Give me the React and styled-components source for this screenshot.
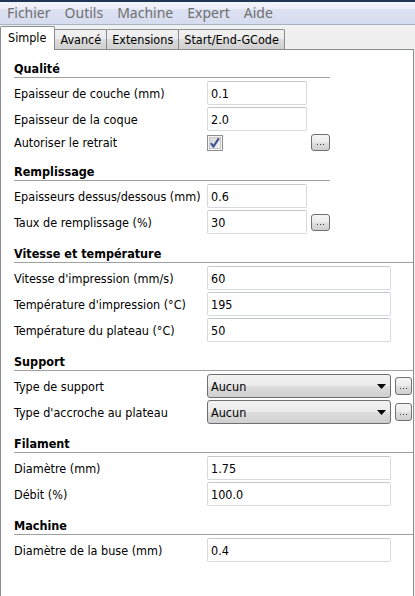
import React from "react";
import styled, { createGlobalStyle } from "styled-components";

const UI = `"DejaVu Sans Condensed", "DejaVu Sans", sans-serif`;

const Global = createGlobalStyle`
  html, body { margin: 0; padding: 0; height: 100%; overflow: hidden; }
  body { background: #f0f0f0; font-family: ${UI}; font-stretch: condensed; color: #000; }
  #root { height: 100%; }
`;

const Window = styled.div`
  display: flex;
  flex-direction: column;
  height: 100%;
`;

const MenuBar = styled.div`
  display: flex;
  height: 22px;
  align-items: center;
  border-top: 2px solid #1d3656;
  border-bottom: 1px solid #a9b1c4;
  background: linear-gradient(#f2f4fa 0, #eceff8 30%, #dce2f2 34%, #d6dcef 100%);
`;

const MenuItem = styled.span`
  padding: 0 7px;
  font-family: "Noto Sans", sans-serif;
  font-stretch: normal;
  font-size: 14px;
  color: #6f6f6f;
  line-height: 22px;
`;

const TabStrip = styled.div`
  display: flex;
  align-items: flex-end;
  height: 24px;
`;

const Tab = styled.div`
  position: relative;
  box-sizing: border-box;
  display: flex;
  align-items: center;
  font-size: 12.5px;
  border: 1px solid #898c95;
  border-bottom: none;
  margin-left: -1px;
  white-space: nowrap;
  border-radius: 2px 2px 0 0;
  ${(p) =>
    p.$active
      ? `
    z-index: 2;
    height: 24px;
    margin-bottom: -1px;
    margin-left: 0;
    padding: 0 8px 3px 7px;
    background: #fff;
  `
      : `
    z-index: 1;
    height: 20px;
    padding: 0 5px;
    background: linear-gradient(#f2f2f2 0, #ebebeb 45%, #dddddd 50%, #cfcfcf 100%);
  `}
`;

const Panel = styled.div`
  flex: 1;
  background: #fff;
  border: 1px solid #898c95;
  border-bottom: none;
  margin-right: 1px;
  padding: 11px 0 0 13px;
`;

const Section = styled.section`
  width: ${(p) => (p.$narrow ? "316px" : "auto")};
  & + & { margin-top: 12px; }
`;

const Header = styled.h3`
  margin: 0 0 3px;
  font-size: 12.5px;
  font-weight: bold;
  line-height: 16px;
  border-bottom: 1px solid #a0a0a0;
`;

const Rows = styled.div`
  display: flex;
  flex-direction: column;
  gap: 2px;
`;

const Row = styled.div`
  display: grid;
  grid-template-columns: 189px ${(p) => (p.$wide ? "184px" : "100px")} auto;
  column-gap: 4px;
  align-items: center;
  justify-items: start;
  height: ${(p) => (p.$compact ? "19px" : "24px")};
`;

const Label = styled.span`
  font-size: 12.5px;
  white-space: nowrap;
`;

const TextBox = styled.div`
  box-sizing: border-box;
  width: 100%;
  height: 24px;
  border: 1px solid #d6d9de;
  border-top-color: #c4c8ce;
  border-radius: 2px;
  padding: 0 3px;
  display: flex;
  align-items: center;
  font-size: 12.5px;
  background: #fff;
`;

const Select = styled.div`
  box-sizing: border-box;
  width: 100%;
  height: 24px;
  border: 1px solid #707070;
  border-radius: 3px;
  padding: 0 4px 0 3px;
  display: flex;
  align-items: center;
  justify-content: space-between;
  font-size: 12.5px;
  background: linear-gradient(#f2f2f2 0, #ebebeb 48%, #dddddd 52%, #cfcfcf 100%);
`;

const MoreButton = styled.div`
  box-sizing: border-box;
  width: ${(p) => (p.$small ? "17px" : "19px")};
  height: ${(p) => (p.$small ? "18px" : "17px")};
  border: 1px solid #707070;
  border-radius: 3px;
  background: linear-gradient(#f4f4f4 0, #ececec 48%, #dedede 52%, #d0d0d0 100%);
  display: flex;
  align-items: flex-end;
  justify-content: center;
  padding-bottom: 5px;
`;

const CheckWrap = styled.div`
  width: 16px;
  height: 16px;
  display: flex;
`;

const Dots = () => (
  <svg width="7" height="1" viewBox="0 0 7 1">
    <rect x="0" y="0" width="1" height="1" fill="#3a3a3a" />
    <rect x="3" y="0" width="1" height="1" fill="#3a3a3a" />
    <rect x="6" y="0" width="1" height="1" fill="#3a3a3a" />
  </svg>
);

const Arrow = () => (
  <svg width="9" height="5" viewBox="0 0 9 5">
    <path d="M0 0 H9 L4.5 5 Z" fill="#000" />
  </svg>
);

const Check = () => (
  <CheckWrap>
    <svg width="16" height="16" viewBox="0 0 16 16">
      <defs>
        <linearGradient id="cbg" x1="0" y1="0" x2="1" y2="1">
          <stop offset="0" stopColor="#d4d4d4" />
          <stop offset="1" stopColor="#f7f7f7" />
        </linearGradient>
      </defs>
      <rect x="0.5" y="0.5" width="15" height="15" fill="#f4f4f4" stroke="#8e8f8f" />
      <rect x="2.5" y="2.5" width="11" height="11" fill="url(#cbg)" stroke="#c6c6c6" />
      <path d="M4 8.2 L6.4 11.6 L11.8 3.4" fill="none" stroke="#3c5090" strokeWidth="2" strokeLinejoin="round" />
    </svg>
  </CheckWrap>
);

const sections = [
  {
    title: "Qualité",
    narrow: true,
    rows: [
      { label: "Epaisseur de couche (mm)", value: "0.1" },
      { label: "Epaisseur de la coque", value: "2.0" },
      { label: "Autoriser le retrait", type: "check", button: true },
    ],
  },
  {
    title: "Remplissage",
    narrow: true,
    rows: [
      { label: "Epaisseurs dessus/dessous (mm)", value: "0.6" },
      { label: "Taux de remplissage (%)", value: "30", button: true },
    ],
  },
  {
    title: "Vitesse et température",
    rows: [
      { label: "Vitesse d'impression (mm/s)", value: "60" },
      { label: "Température d'impression (°C)", value: "195" },
      { label: "Température du plateau (°C)", value: "50" },
    ],
  },
  {
    title: "Support",
    rows: [
      { label: "Type de support", type: "select", value: "Aucun", button: true },
      { label: "Type d'accroche au plateau", type: "select", value: "Aucun", button: true },
    ],
  },
  {
    title: "Filament",
    rows: [
      { label: "Diamètre (mm)", value: "1.75" },
      { label: "Débit (%)", value: "100.0" },
    ],
  },
  {
    title: "Machine",
    rows: [{ label: "Diamètre de la buse (mm)", value: "0.4" }],
  },
];

const menus = ["Fichier", "Outils", "Machine", "Expert", "Aide"];
const tabs = ["Simple", "Avancé", "Extensions", "Start/End-GCode"];

export default function App() {
  return (
    <>
      <Global />
      <Window>
        <MenuBar>
          {menus.map((m) => (
            <MenuItem key={m}>{m}</MenuItem>
          ))}
        </MenuBar>
        <TabStrip>
          {tabs.map((t, i) => (
            <Tab key={t} $active={i === 0}>
              {t}
            </Tab>
          ))}
        </TabStrip>
        <Panel>
          {sections.map((s) => (
            <Section key={s.title} $narrow={s.narrow}>
              <Header>{s.title}</Header>
              <Rows>
                {s.rows.map((r) => (
                  <Row key={r.label} $wide={!s.narrow} $compact={r.type === "check"}>
                    <Label>{r.label}</Label>
                    {r.type === "check" ? (
                      <Check />
                    ) : r.type === "select" ? (
                      <Select>
                        <span>{r.value}</span>
                        <Arrow />
                      </Select>
                    ) : (
                      <TextBox>{r.value}</TextBox>
                    )}
                    {r.button ? (
                      <MoreButton $small={r.type === "select"}>
                        <Dots />
                      </MoreButton>
                    ) : (
                      <span />
                    )}
                  </Row>
                ))}
              </Rows>
            </Section>
          ))}
        </Panel>
      </Window>
    </>
  );
}
